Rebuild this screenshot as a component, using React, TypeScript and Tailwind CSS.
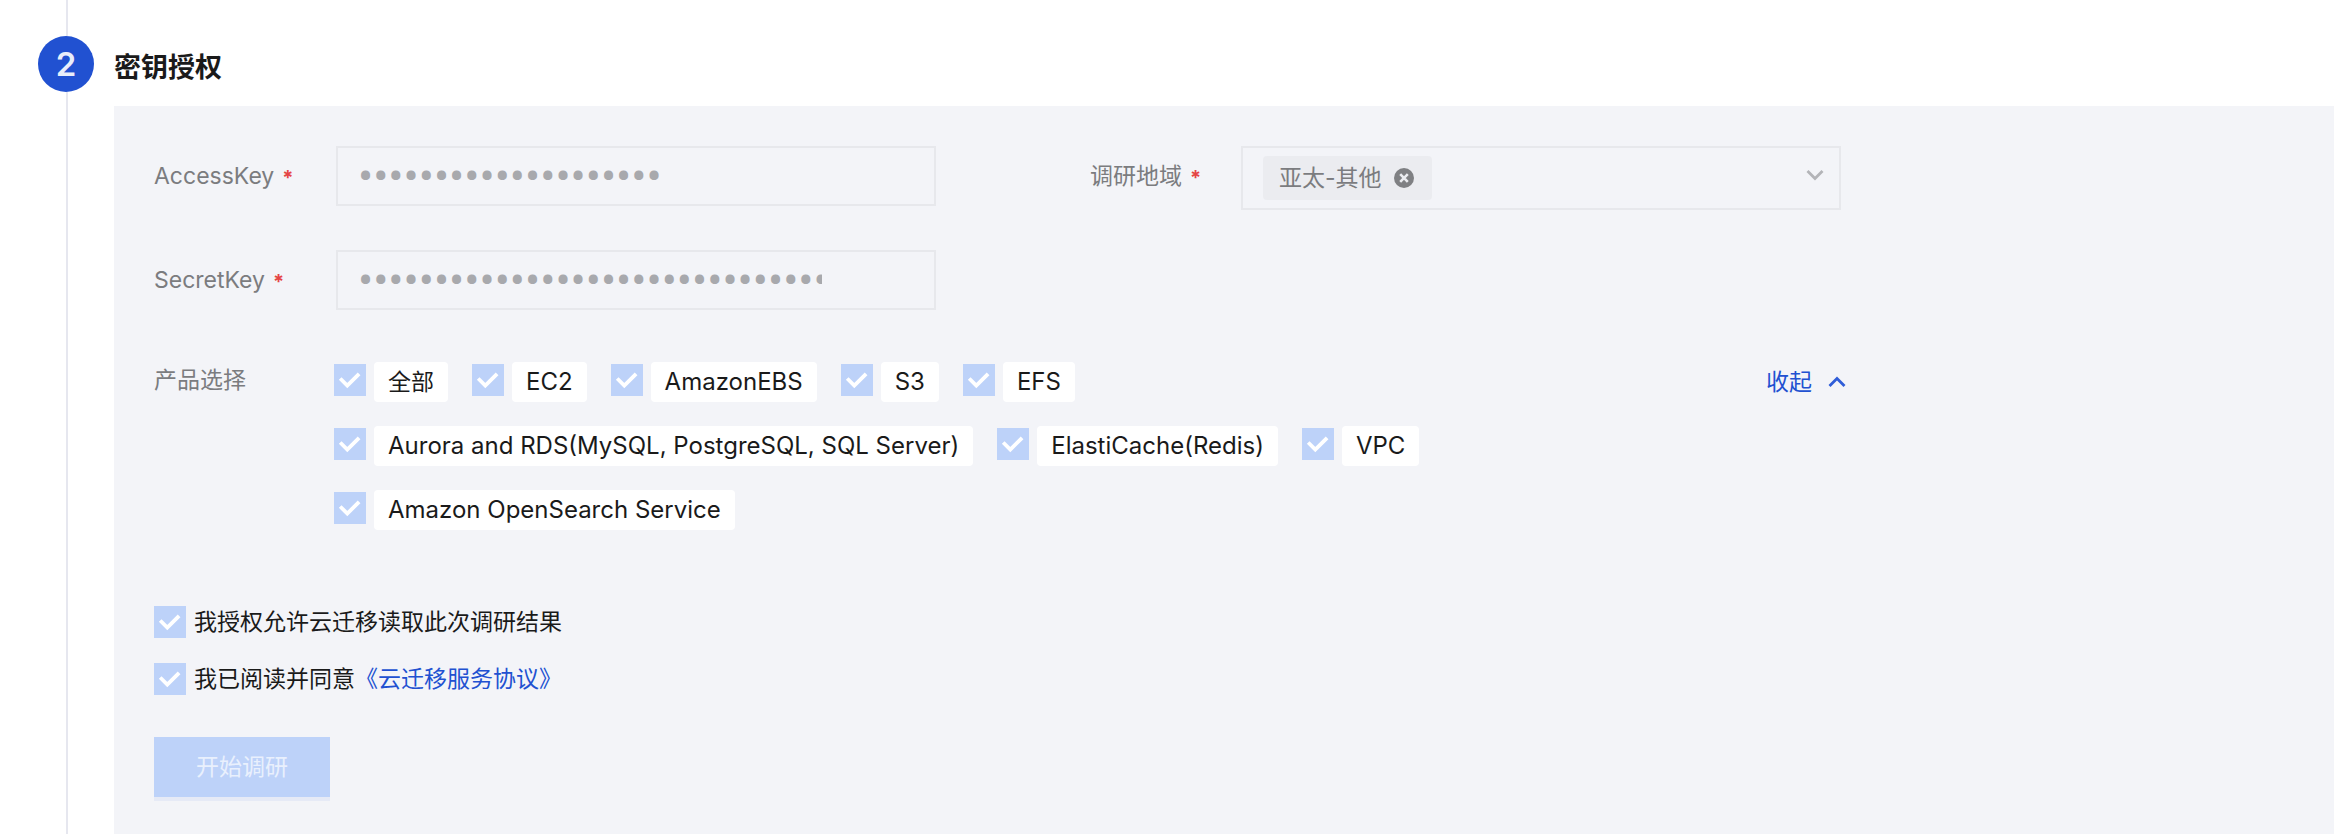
import { useId, type ReactNode } from "react";

const products = [
  "EC2",
  "AmazonEBS",
  "S3",
  "EFS",
  "Aurora and RDS(MySQL, PostgreSQL, SQL Server)",
  "ElastiCache(Redis)",
  "VPC",
  "Amazon OpenSearch Service",
];

function CheckBox({ id }: { id: string }) {
  return (
    <span className="relative block size-8 shrink-0">
      <input
        id={id}
        type="checkbox"
        defaultChecked
        disabled
        className="block size-8 appearance-none bg-[#bdd2f9]"
      />
      <svg
        viewBox="0 0 32 32"
        fill="none"
        aria-hidden="true"
        className="pointer-events-none absolute inset-0 size-8"
      >
        <path d="M6.2 14.5 13.3 21.6 25.1 9.8" stroke="#fff" strokeWidth="3.8" />
      </svg>
    </span>
  );
}

function FieldLabel({ htmlFor, children }: { htmlFor: string; children: ReactNode }) {
  return (
    <label htmlFor={htmlFor} className="flex h-15 items-center gap-2 text-[#7b7c7f]">
      {children}
      <span className="pt-1 text-xl font-bold text-[#e54545]">*</span>
    </label>
  );
}

function SecretField({ label, value }: { label: string; value: string }) {
  const id = useId();
  return (
    <div className="flex">
      <div className="w-[182px] shrink-0">
        <FieldLabel htmlFor={id}>{label}</FieldLabel>
      </div>
      <input
        id={id}
        type="password"
        defaultValue={value}
        disabled
        className="h-15 w-[600px] min-w-0 border-2 border-[#e7e8ec] bg-transparent pr-28 pl-5 font-['Roboto',sans-serif] text-[45px] text-[#a8a9ad]"
      />
    </div>
  );
}

function RegionField() {
  const id = useId();
  return (
    <div className="flex">
      <div className="w-[151px] shrink-0">
        <FieldLabel htmlFor={id}>调研地域</FieldLabel>
      </div>
      <div className="relative flex h-16 w-[600px] min-w-0 items-center border-2 border-[#e7e8ec] pl-5">
        <span className="flex h-11 shrink-0 items-center gap-3 rounded bg-[#ebecf0] pr-[18px] pl-4 text-[#7b7c7f]">
          亚太-其他
          <button type="button" disabled aria-label="移除">
            <svg viewBox="0 0 20 20" className="size-5" aria-hidden="true">
              <circle cx="10" cy="10" r="10" fill="#7f8083" />
              <path d="M6.2 6.2 13.8 13.8M13.8 6.2 6.2 13.8" stroke="#ebecf0" strokeWidth="2.6" />
            </svg>
          </button>
        </span>
        <select
          id={id}
          disabled
          className="h-full min-w-0 flex-1 appearance-none bg-transparent"
        />
        <svg
          viewBox="0 0 18 12"
          fill="none"
          aria-hidden="true"
          className="pointer-events-none absolute top-[22px] right-[15px] h-3 w-[18px]"
        >
          <path d="M1.5 1 9 8.5 16.5 1" stroke="#b3b4b8" strokeWidth="2.8" />
        </svg>
      </div>
    </div>
  );
}

function ProductOption({ children }: { children: ReactNode }) {
  const id = useId();
  return (
    <li className="flex gap-2">
      <span className="pt-0.5">
        <CheckBox id={id} />
      </span>
      <label htmlFor={id} className="h-10 rounded bg-white px-3.5 leading-10">
        {children}
      </label>
    </li>
  );
}

function Consent({ children }: { children: ReactNode }) {
  const id = useId();
  return (
    <div className="flex items-center gap-2">
      <CheckBox id={id} />
      <label htmlFor={id} className="leading-8">
        {children}
      </label>
    </div>
  );
}

export default function App() {
  return (
    <main className="flex min-h-screen bg-white pl-[38px] font-['Inter','Noto_Sans_CJK_SC',sans-serif] text-[23px] leading-8 text-[#1a1a1a]">
      <div className="flex w-14 shrink-0 flex-col items-center">
        <span className="ml-0.5 h-9 w-0.5 bg-[#e6e7ef]" />
        <span className="flex size-14 items-center justify-center rounded-full bg-[#2151d1] text-[33px] font-semibold text-[#e9eefa]">
          2
        </span>
        <span className="ml-0.5 w-0.5 flex-1 bg-[#e6e7ef]" />
      </div>

      <section className="ml-5 flex min-w-0 flex-1 flex-col">
        <h2 className="pt-12 pb-[18px] text-[27px] leading-10 font-bold">密钥授权</h2>

        <form className="flex-1 bg-[#f3f4f8] px-10 pt-10 pb-8">
          <div className="flex flex-wrap items-start gap-x-[154px] gap-y-11">
            <div className="flex flex-col gap-11">
              <SecretField label="AccessKey" value="AKIAXXXXXXXXXXXXXXXX" />
              <SecretField label="SecretKey" value="xxxxxxxxxxxxxxxxxxxxxxxxxxxxxxxxxxxxxxxx" />
            </div>
            <RegionField />
          </div>

          <div className="mt-13 flex max-w-[1692px]">
            <h3 className="w-45 shrink-0 leading-9 text-[#7b7c7f]">产品选择</h3>
            <ul className="flex max-w-[1200px] flex-1 flex-wrap gap-6">
              <ProductOption>全部</ProductOption>
              {products.map((name) => (
                <ProductOption key={name}>
                  <span className="text-2xl/10">{name}</span>
                </ProductOption>
              ))}
            </ul>
            <button
              type="button"
              className="ml-auto flex h-10 shrink-0 items-center gap-4 text-[#2151d1]"
            >
              收起
              <svg viewBox="0 0 18 12" fill="none" aria-hidden="true" className="h-3 w-[18px]">
                <path d="M1.5 10 9 2.5 16.5 10" stroke="#2f5dd8" strokeWidth="2.8" />
              </svg>
            </button>
          </div>

          <div className="mt-19 flex flex-col gap-[25px]">
            <Consent>我授权允许云迁移读取此次调研结果</Consent>
            <Consent>
              我已阅读并同意
              <a href="#agreement" className="text-[#2151d1]">
                《云迁移服务协议》
              </a>
            </Consent>
          </div>

          <button
            type="submit"
            disabled
            className="mt-[42px] h-15 w-44 bg-[#bdd2f9] text-[#e9f0fd] shadow-[0_4px_0_#e6eaf6]"
          >
            开始调研
          </button>
        </form>
      </section>
    </main>
  );
}
